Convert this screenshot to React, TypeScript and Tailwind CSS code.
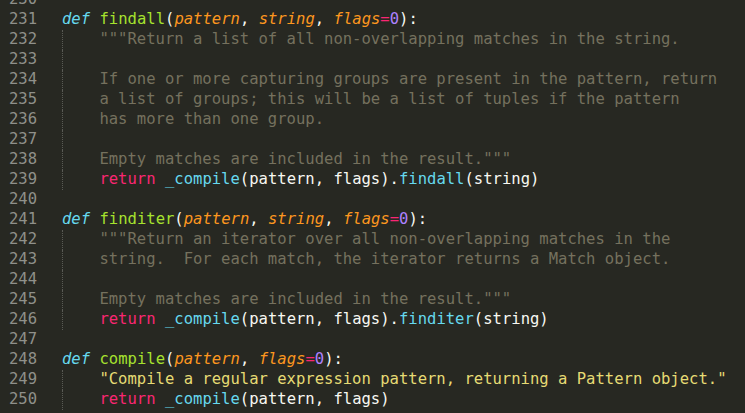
type Tok = [string, string];

const kw = "text-[#66d9ef] italic";
const fn = "text-[#a6e22e]";
const pa = "text-[#fd971f] italic";
const op = "text-[#f92672]";
const num = "text-[#ae81ff]";
const doc = "text-[#75715e]";
const str = "text-[#e6db74]";
const call = "text-[#66d9ef]";
const pl = "text-[#f8f8f2]";

type Line = { n: number; guide?: boolean; toks: Tok[] };

const lines: Line[] = [
  { n: 230, toks: [] },
  {
    n: 231,
    toks: [
      [kw, "def"], [pl, " "], [fn, "findall"], [pl, "("], [pa, "pattern"], [pl, ", "],
      [pa, "string"], [pl, ", "], [pa, "flags"], [op, "="], [num, "0"], [pl, "):"],
    ],
  },
  { n: 232, guide: true, toks: [[doc, '"""Return a list of all non-overlapping matches in the string.']] },
  { n: 233, guide: true, toks: [] },
  { n: 234, guide: true, toks: [[doc, "If one or more capturing groups are present in the pattern, return"]] },
  { n: 235, guide: true, toks: [[doc, "a list of groups; this will be a list of tuples if the pattern"]] },
  { n: 236, guide: true, toks: [[doc, "has more than one group."]] },
  { n: 237, guide: true, toks: [] },
  { n: 238, guide: true, toks: [[doc, 'Empty matches are included in the result."""']] },
  {
    n: 239,
    guide: true,
    toks: [
      [op, "return"], [pl, " "], [call, "_compile"], [pl, "(pattern, flags)."],
      [call, "findall"], [pl, "(string)"],
    ],
  },
  { n: 240, toks: [] },
  {
    n: 241,
    toks: [
      [kw, "def"], [pl, " "], [fn, "finditer"], [pl, "("], [pa, "pattern"], [pl, ", "],
      [pa, "string"], [pl, ", "], [pa, "flags"], [op, "="], [num, "0"], [pl, "):"],
    ],
  },
  { n: 242, guide: true, toks: [[doc, '"""Return an iterator over all non-overlapping matches in the']] },
  { n: 243, guide: true, toks: [[doc, "string.  For each match, the iterator returns a Match object."]] },
  { n: 244, guide: true, toks: [] },
  { n: 245, guide: true, toks: [[doc, 'Empty matches are included in the result."""']] },
  {
    n: 246,
    guide: true,
    toks: [
      [op, "return"], [pl, " "], [call, "_compile"], [pl, "(pattern, flags)."],
      [call, "finditer"], [pl, "(string)"],
    ],
  },
  { n: 247, toks: [] },
  {
    n: 248,
    toks: [
      [kw, "def"], [pl, " "], [fn, "compile"], [pl, "("], [pa, "pattern"], [pl, ", "],
      [pa, "flags"], [op, "="], [num, "0"], [pl, "):"],
    ],
  },
  { n: 249, guide: true, toks: [[str, '"Compile a regular expression pattern, returning a Pattern object."']] },
  {
    n: 250,
    guide: true,
    toks: [[op, "return"], [pl, " "], [call, "_compile"], [pl, "(pattern, flags)"]],
  },
];

const CodeLine = ({ line }: { line: Line }) => (
  <div className="flex h-[20px] items-center">
    <span className="w-[37px] shrink-0 text-right text-[#8f908a]">{line.n}</span>
    <div className="ml-[25px] flex h-full items-center">
      {line.guide ? (
        <span className="h-full w-[37.4px] shrink-0 border-l border-dotted border-[#5a5b55]" />
      ) : null}
      <span className="whitespace-pre">
        {line.toks.map(([cls, text], i) => (
          <span key={i} className={cls}>
            {text}
          </span>
        ))}
      </span>
    </div>
  </div>
);

export default function App() {
  return (
    <div className="h-screen w-full overflow-hidden bg-[#272822] font-['DejaVu_Sans_Mono',monospace] text-[15.55px]">
      <div className="-mt-[10px] flex flex-col">
        {lines.map((l) => (
          <CodeLine key={l.n} line={l} />
        ))}
      </div>
    </div>
  );
}
